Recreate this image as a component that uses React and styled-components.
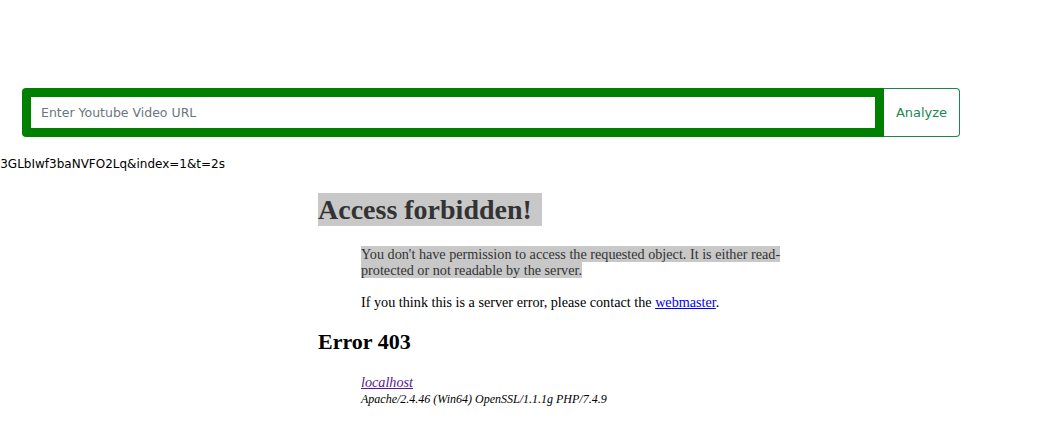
import React from 'react';
import styled, { createGlobalStyle } from 'styled-components';

const GlobalStyle = createGlobalStyle`
  html, body {
    margin: 0;
    padding: 0;
    background: #ffffff;
  }
  body {
    width: 1061px;
    height: 437px;
    overflow: hidden;
  }
`;

const Page = styled.div`
  padding-top: 88px;
`;

const SearchForm = styled.form`
  display: flex;
  width: 938px;
  margin-left: 22px;
  height: 49px;
`;

const UrlInput = styled.input`
  flex: 1;
  box-sizing: border-box;
  height: 49px;
  border: 9px solid #008000;
  border-radius: 4px 0 0 4px;
  padding: 0 10px;
  font-family: 'DejaVu Sans', 'Open Sans', sans-serif;
  font-size: 12.5px;
  color: #212529;
  outline: none;

  &::placeholder {
    color: #6c757d;
  }
`;

const AnalyzeButton = styled.button`
  box-sizing: border-box;
  width: 76px;
  height: 49px;
  background: #ffffff;
  border: 1px solid #198754;
  border-left: none;
  border-radius: 0 4px 4px 0;
  color: #198754;
  font-family: 'DejaVu Sans', 'Open Sans', sans-serif;
  font-size: 13px;
  font-weight: 500;
  cursor: pointer;
`;

const UrlEcho = styled.div`
  display: flex;
  justify-content: flex-end;
  width: 225px;
  overflow: hidden;
  white-space: nowrap;
  margin-top: 19px;
  font-family: 'DejaVu Sans', sans-serif;
  font-size: 12px;
  line-height: 16px;
  color: #000;
`;

const ErrorFrame = styled.div`
  margin-left: 318px;
  width: 500px;
  margin-top: 21px;
  font-family: 'Liberation Serif', 'Times New Roman', serif;
  color: #000;
`;

const Selected = styled.span`
  background: #c8c8c8;
  color: #333333;
`;

const Title = styled.h1`
  margin: 0;
  font-size: 28px;
  line-height: 33px;
  font-weight: bold;

  ${Selected} {
    padding-right: 10px;
    display: inline-block;
  }
`;

const Para = styled.p`
  margin: ${(p) => p.$top || 0}px 0 0 43px;
  width: 432px;
  font-size: 14.2px;
  line-height: 16px;
`;

const Link = styled.a`
  color: ${(p) => (p.$visited ? '#551a8b' : '#0000ee')};
  text-decoration: underline;
`;

const SubTitle = styled.h2`
  margin: 19px 0 0;
  font-size: 22px;
  line-height: 26px;
  font-weight: bold;
`;

const Address = styled.address`
  margin: 19px 0 0 43px;
  font-size: 14.2px;
  line-height: 16px;
  font-style: italic;
`;

const Signature = styled.span`
  display: block;
  font-size: 12px;
  line-height: 18px;
`;

export default function App() {
  return (
    <Page>
      <GlobalStyle />
      <SearchForm onSubmit={(e) => e.preventDefault()}>
        <UrlInput type="text" placeholder="Enter Youtube Video URL" />
        <AnalyzeButton type="submit">Analyze</AnalyzeButton>
      </SearchForm>

      <UrlEcho>
        <span>https://www.youtube.com/watch?v=dQw4w9WgXcQ&amp;list=PLx3GLbIwf3baNVFO2Lq&amp;index=1&amp;t=2s</span>
      </UrlEcho>

      <ErrorFrame>
        <Title>
          <Selected>Access forbidden!</Selected>
        </Title>
        <Para $top={20}>
          <Selected>
            You don't have permission to access the requested object. It is either read-protected or not readable by the server.
          </Selected>
        </Para>
        <Para $top={16}>
          If you think this is a server error, please contact the <Link href="#">webmaster</Link>.
        </Para>
        <SubTitle>Error 403</SubTitle>
        <Address>
          <Link href="#" $visited>localhost</Link>
          <Signature>Apache/2.4.46 (Win64) OpenSSL/1.1.1g PHP/7.4.9</Signature>
        </Address>
      </ErrorFrame>
    </Page>
  );
}
